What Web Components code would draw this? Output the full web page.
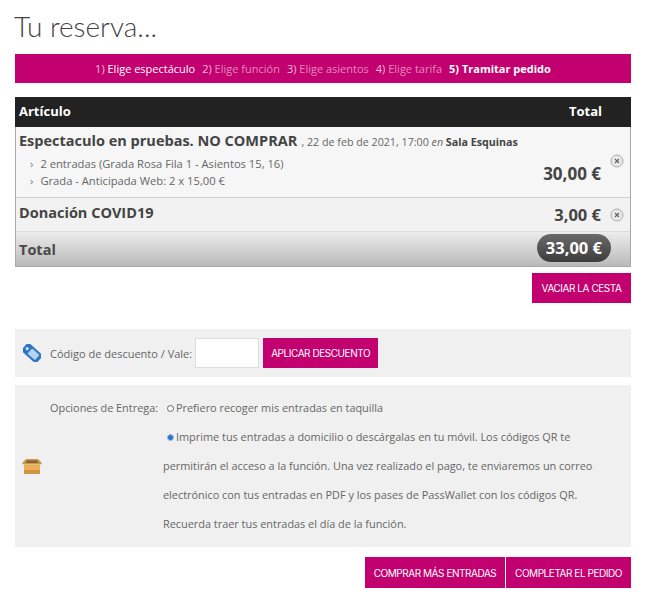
<!DOCTYPE html>
<html lang="es"><head><meta charset="utf-8"><title>Tu reserva</title>
<style>
html,body{margin:0;padding:0;background:#fff}
body{font-family:"Open Sans",sans-serif;color:#555;width:645px;height:600px;overflow:hidden}
</style></head><body>
<checkout-page>
  <page-title>Tu reserva...</page-title>
  <step-bar></step-bar>
  <cart-table></cart-table>
  <button-row class="clear"><pink-button style="width:99px;height:30px">VACIAR LA CESTA</pink-button></button-row>
  <discount-box></discount-box>
  <delivery-box></delivery-box>
  <button-row class="actions"><pink-button style="width:140px">COMPRAR MÁS ENTRADAS</pink-button><pink-button style="width:125px">COMPLETAR EL PEDIDO</pink-button></button-row>
</checkout-page>
<script>
function def(name,html){customElements.define(name,class extends HTMLElement{constructor(){super();this.attachShadow({mode:'open'}).innerHTML=html;}});}
def('checkout-page',`<style>
:host{display:flex;flex-direction:column;width:616px;margin-left:15px}
::slotted(.clear){margin-top:6px;margin-bottom:26px}
::slotted(.actions){margin-top:10px}
</style><slot></slot>`);
def('button-row',`<style>:host{display:flex;justify-content:flex-end;gap:1px}</style><slot></slot>`);
def('page-title',`<style>:host{display:block;height:54px;box-sizing:border-box;padding-top:8px;margin-left:-1px;font:300 28px/36px Lato,sans-serif;color:#444}</style><slot></slot>`);
def('step-bar',`<style>:host{display:flex;justify-content:center;align-items:center;gap:7px;height:29px;margin-bottom:14px;background:#c3006f;font:400 11px "Open Sans",sans-serif;color:#e58bbd}
.on{color:#fff}.now{color:#fff;font-weight:700}.n{color:#f3bdd9}</style>
<span class="n">1) <span class="on">Elige espectáculo</span></span><span><span class="n">2)</span> Elige función</span><span><span class="n">3)</span> Elige asientos</span><span><span class="n">4)</span> Elige tarifa</span><span class="now">5) Tramitar pedido</span>`);
const X=`<svg width="14" height="14" viewBox="0 0 14 14"><circle cx="7" cy="7" r="6" fill="#e9e9e9" stroke="#aaa"/><path d="M5 5l4 4M9 5l-4 4" stroke="#666" stroke-width="1.2"/></svg>`;
def('cart-table',`<style>
:host{display:block;border:1px solid #a8a8a8;border-top:0;box-sizing:border-box;width:616px;font-family:"Open Sans",sans-serif}
.h{display:flex;justify-content:space-between;align-items:center;height:30px;margin:0 -1px;background:#222;color:#fff;font-weight:700;font-size:13px;padding:0 29px 2px 4px;box-sizing:border-box}
.r1{display:flex;height:71px;box-sizing:border-box;background:#f6f6f6;border-bottom:1px solid #d2d2d2;padding:2px 6px 0 3px}
.t{font-size:14.5px;font-weight:700;color:#444;line-height:20px}
.s{font-size:10.7px;color:#666}.s b{color:#444}
ul{list-style:none;margin:4px 0 0;padding:0 0 0 11px;font-size:11.2px;line-height:17px;color:#666}
li{display:flex;gap:7px}li::before{content:"›";color:#777}
.grow{flex:1}
.p{font-size:17px;font-weight:700;color:#444;white-space:nowrap}
.c1{display:flex;align-items:flex-start;gap:9px;padding:33px 0 0}
.c1 svg{margin-top:-8px}
.r2{display:flex;align-items:center;justify-content:space-between;height:34px;box-sizing:border-box;background:#f2f2f2;border-bottom:1px solid #dcdcdc;padding:0 6px 0 3px}
.r2 .t{margin-top:-4px}
.r2 .c{display:flex;align-items:center;gap:9px}
.r2 .p{font-size:16.5px}
.r3{display:flex;align-items:center;justify-content:space-between;height:34px;box-sizing:border-box;background:linear-gradient(#ececec,#b9b9b9);padding:0 19px 0 3px}
.r3 .t{color:#4a4a4a;margin-top:2px}
.pill{background:linear-gradient(#6a6a6a,#3d3d3d);color:#fff;border-radius:14px;height:28px;line-height:28px;padding:0 9px;font-size:16.5px;font-weight:700;margin-top:-2px}
</style>
<div class="h"><span>Artículo</span><span>Total</span></div>
<div class="r1"><div class="grow"><div><span class="t">Espectaculo en pruebas. NO COMPRAR</span> <span class="s">, 22 de feb de 2021, 17:00 <i>en</i> <b>Sala Esquinas</b></span></div>
<ul><li>2 entradas (Grada Rosa Fila 1 - Asientos 15, 16)</li><li>Grada - Anticipada Web: 2 x 15,00 €</li></ul></div>
<div class="c1"><span class="p">30,00 €</span>${X}</div></div>
<div class="r2"><span class="t">Donación COVID19</span><span class="c"><span class="p">3,00 €</span>${X}</span></div>
<div class="r3"><span class="t">Total</span><span class="pill">33,00 €</span></div>`);
def('pink-button',`<style>:host{display:inline-flex;align-items:center;justify-content:center;box-sizing:border-box;height:31px;padding:0 6px;background:#c3006f;color:#fff;font:400 10px Inter,sans-serif;letter-spacing:-.45px;white-space:nowrap}</style><slot></slot>`);
def('discount-box',`<style>:host{display:flex;align-items:center;height:48px;box-sizing:border-box;margin-bottom:8px;background:#f0f0f0;padding:0 0 0 8px;font-size:11px;color:#666}
.l{margin:0 3px 0 9px}.i{width:64px;height:30px;box-sizing:border-box;background:#fff;border:1px solid #ddd;margin-right:4px}
pink-button{width:115px;height:30px}</style>
<svg width="18" height="18" viewBox="0 0 18 18"><g transform="rotate(42 9 9)"><rect x="-1" y="3.5" width="20" height="11" rx="3.5" fill="#2f74c4"/><rect x="6" y="5.5" width="10" height="7" rx="1" fill="#b5d3f2"/><circle cx="2.5" cy="9" r="1.6" fill="#d5e6f7"/></g></svg>
<span class="l">Código de descuento / Vale:</span><span class="i"></span><pink-button>APLICAR DESCUENTO</pink-button>`);
def('delivery-box',`<style>:host{display:grid;grid-template-columns:35px 113px 1fr;align-items:start;align-content:start;height:162px;box-sizing:border-box;background:#f0f0f0;padding-top:8px;font-size:10.9px;color:#666}
.ico{grid-row:1/3;align-self:center;margin:2px 0 0 7px}
.lb{line-height:29px;white-space:nowrap}
.o{line-height:29px;padding-left:4px}
.w{grid-column:3;line-height:29px}
.r{display:inline-block;width:7px;height:7px;border-radius:50%;box-sizing:border-box;border:1px solid #666;background:#fff;margin-right:2px;vertical-align:0}
.r.on{background:#2f6fc4;border:1px solid #9dbfe8}
.ind{padding-left:4px}
</style>
<svg class="ico" width="20" height="15" viewBox="0 0 20 15"><path d="M4 0h12l4 4q-1 1.500-2 1.500H2Q1 5.500 0 4z" fill="#c9995a"/><path d="M5 1.500h10l1.500 2.500h-13z" fill="#8a6430"/><path d="M2 5.500h16V15H2z" fill="#e8b05a"/><path d="M2 11h16v4H2z" fill="#cd9645"/></svg>
<span class="lb">Opciones de Entrega:</span>
<div class="o"><span class="r"></span>Prefiero recoger mis entradas en taquilla</div>
<div class="w"><span class="ind"><span class="r on"></span>Imprime tus entradas a domicilio o descárgalas en tu móvil. Los códigos QR te</span><br>permitirán el acceso a la función. Una vez realizado el pago, te enviaremos un correo<br>electrónico con tus entradas en PDF y los pases de PassWallet con los códigos QR.<br>Recuerda traer tus entradas el día de la función.</div>`);
</script>
</body></html>
